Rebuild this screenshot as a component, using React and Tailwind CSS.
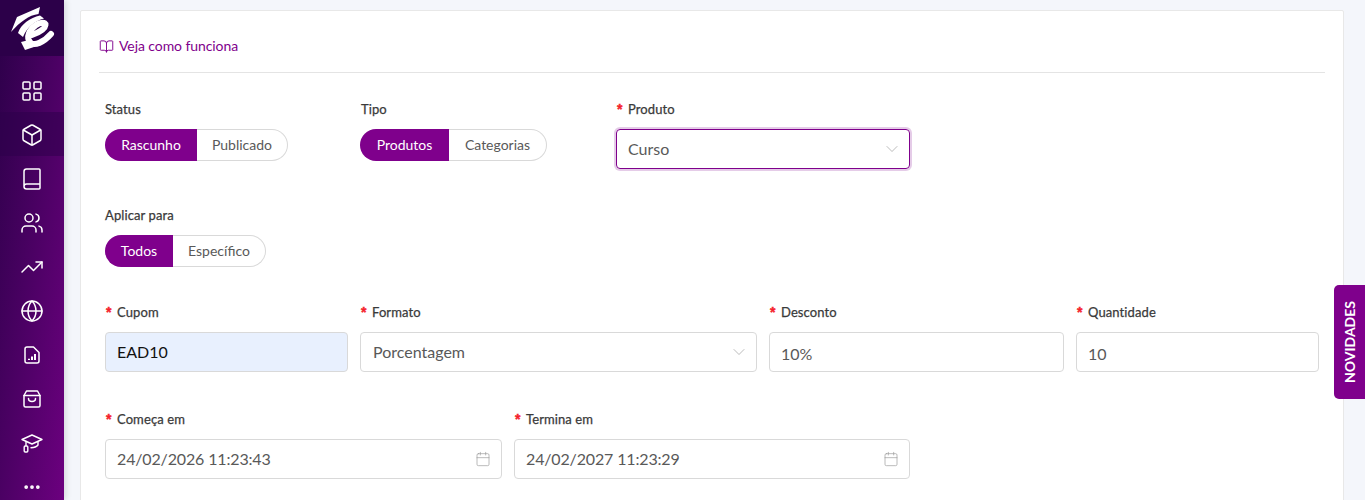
import React from "react";
import { LayoutGrid, Box, Book, Users, TrendingUp, Globe, Ellipsis, BookOpen, ChevronDown, Calendar } from "lucide-react";

function ReportIcon() {
  return (
    <svg width="20" height="20" viewBox="0 0 20 20" fill="none" stroke="white" strokeWidth="1.5" strokeLinejoin="round" strokeLinecap="round">
      <path d="M5 2h6.5L17 7.5V16a2 2 0 0 1-2 2H5a2 2 0 0 1-2-2V4a2 2 0 0 1 2-2z" />
      <path d="M7 15v-1.2M10 15v-3.4M13 15V9" strokeWidth="2" strokeLinecap="butt" />
    </svg>
  );
}

function BagIcon() {
  return (
    <svg width="20" height="20" viewBox="0 0 20 20" fill="none" stroke="white" strokeWidth="1.5" strokeLinejoin="round" strokeLinecap="round">
      <path d="M4.5 2h11L18 6.5V16.5a1.5 1.5 0 0 1-1.5 1.5h-13A1.5 1.5 0 0 1 2 16.5V6.5z" />
      <path d="M2 6.5h16" />
      <path d="M6.5 9.5c0 4 7 4 7 0" />
    </svg>
  );
}

function CapIcon() {
  return (
    <svg width="22" height="22" viewBox="0 0 22 22" fill="none" stroke="white" strokeWidth="1.4" strokeLinejoin="round" strokeLinecap="round">
      <path d="M11 3l10 4.5L11 12 1 7.5z" />
      <path d="M17 10v3c-1.5 2-4 2.7-7 2.7" />
      <path d="M5 9.5v4" />
      <rect x="3.2" y="14" width="3.6" height="6" rx="1" />
    </svg>
  );
}

function Logo() {
  return (
    <svg width="64" height="56" viewBox="0 0 64 56" fill="white">
      <path d="M11 32 L17 17 L40 7 L38.5 14 C29 15 20 22 11 32z" />
      <path d="M18 33 C21 24 30 18 40 15.5 L44 18.5 C35 21 27 27 23 37z" />
      <path d="M32 35 C38 33 45 29 45.5 25 C46 22 40 22 36 25 C29 30 26 37 30 42 C34 47 44 42 51 34" fill="none" stroke="white" strokeWidth="6" strokeLinecap="round" />
      <path d="M21 42 L29 40 L34 47 L25 50z" />
    </svg>
  );
}

function Label({ children, req, shift }) {
  return (
    <div className="h-5 flex items-center text-[13px] text-[#3a3a3a] leading-5 tracking-[0.1px] [-webkit-text-stroke:0.25px_#3a3a3a]">
      {req && <span className="text-[#f5222d] [-webkit-text-stroke:0.4px_#f5222d] ml-px mr-[4px] w-[7px] text-[14px] font-bold leading-5 font-['Liberation_Sans',sans-serif]">*</span>}
      <span className={shift ? "ml-px" : ""}>{children}</span>
    </div>
  );
}

function Seg({ a, b, aw, bw }) {
  return (
    <div className="flex h-8 text-[14px] leading-8">
      <div className={`${aw} bg-[#7f008c] text-white rounded-l-full text-center`}>{a}</div>
      <div className={`${bw} bg-white border border-l-0 border-[#d9d9d9] rounded-r-full text-center leading-[30px] text-[#595959]`}>{b}</div>
    </div>
  );
}

function Field({ label, width, children, extra, shift }) {
  return (
    <div className={width}>
      <Label req shift={shift}>{label}</Label>
      <div className={`mt-[10px] h-10 border border-[#d9d9d9] rounded-[4px] flex items-center justify-between pl-[11px] pr-[11px] text-[16px] text-[#595959] ${extra || "bg-white"}`}>
        {children}
      </div>
    </div>
  );
}

export default function App() {
  const icons = [
    [LayoutGrid, ""], [Box, "bg-[#2c0049]/50"], [Book, ""], [Users, ""], [TrendingUp, ""], [Globe, ""],
  ];
  const rowCls = "h-11 flex items-center justify-center pt-[2px]";
  return (
    <div className="h-[500px] overflow-hidden flex bg-[#f4f6fb] font-['Lato',sans-serif]">
      <aside className="w-16 h-[500px] overflow-hidden shrink-0 flex flex-col bg-gradient-to-br from-[#2c0049] to-[#6c007f] shadow-[2px_0_6px_rgba(0,0,0,0.12)]">
        <div className="w-full h-[56px] shrink-0 bg-[#2c0049]"><Logo /></div>
        <div className="w-full flex flex-col pt-3">
          {icons.map(([I, cls], i) => (
            <div key={i} className={`${rowCls} ${cls}`}>
              <I size={24} color="white" strokeWidth={1.5} />
            </div>
          ))}
          <div className={rowCls}><ReportIcon /></div>
          <div className={rowCls}><BagIcon /></div>
          <div className={rowCls}><CapIcon /></div>
          <div className={rowCls}><Ellipsis size={20} color="white" strokeWidth={2.5} /></div>
        </div>
      </aside>

      <main className="flex-1 pl-4 pr-[21px] pt-[10px]">
        <div className="h-[520px] bg-white border border-[#e8e8e8] rounded-[2px] px-[18px]">
          <div className="h-[62px] pt-[25px] flex items-start border-b border-[#e4e4e4]">
            <a className="flex items-center text-[14px] leading-5 tracking-[-0.08px] text-[#7f008c]">
              <BookOpen size={15} strokeWidth={1.5} className="mr-[5px]" />
              Veja como funciona
            </a>
          </div>

          <div className="pl-[6px]">
            <div className="flex pt-[26px] h-[131px]">
              <div className="w-[255px]">
                <Label>Status</Label>
                <div className="mt-[10px]"><Seg a="Rascunho" b="Publicado" aw="w-[92px]" bw="w-[91px]" /></div>
              </div>
              <div className="w-[256px]">
                <Label shift>Tipo</Label>
                <div className="mt-[10px]"><Seg a="Produtos" b="Categorias" aw="w-[89px]" bw="w-[98px]" /></div>
              </div>
              <div className="w-[294px]">
                <Label req>Produto</Label>
                <div className="mt-[10px] h-10 border border-[#7f008c] rounded-[4px] shadow-[0_0_0_2px_rgba(127,0,140,0.2)] flex items-center justify-between px-[11px] text-[16px] text-[#595959]">
                  <span>Curso</span>
                  <ChevronDown size={20} strokeWidth={0.8} className="text-[#999] -mr-1" />
                </div>
              </div>
            </div>

            <div className="h-[98px] pt-[1px]">
              <Label>Aplicar para</Label>
              <div className="mt-[10px]"><Seg a="Todos" b="Específico" aw="w-[68px]" bw="w-[93px]" /></div>
            </div>

            <div className="flex gap-3 h-[107px]">
              <Field label="Cupom" width="w-[243px]" extra="bg-[#e8f0fe] !text-[#111]">EAD10</Field>
              <Field label="Formato" width="w-[397px]">
                <span className="ml-px">Porcentagem</span>
                <ChevronDown size={20} strokeWidth={0.8} className="text-[#999] -mr-1" />
              </Field>
              <Field label="Desconto" width="w-[295px]"><span className="translate-y-[2px]">10%</span></Field>
              <Field label="Quantidade" width="w-[243px]"><span className="translate-y-[2px]">10</span></Field>
            </div>

            <div className="flex gap-3">
              <Field label="Começa em" width="w-[397px]">
                <span className="tracking-[-0.15px]">24/02/2026 11:23:43</span>
                <Calendar size={16} strokeWidth={1} className="text-[#999] -mr-px" />
              </Field>
              <Field label="Termina em" width="w-[396px]">
                <span className="tracking-[-0.15px]">24/02/2027 11:23:29</span>
                <Calendar size={16} strokeWidth={1} className="text-[#999] -mr-px" />
              </Field>
            </div>
          </div>
        </div>
      </main>

      <div className="fixed right-0 top-[285px] w-[31px] h-[114px] bg-[#7f008c] rounded-l-[5px] flex items-center justify-center">
        <span className="text-white font-bold text-[14px] [writing-mode:vertical-rl] rotate-180">NOVIDADES</span>
      </div>
    </div>
  );
}
